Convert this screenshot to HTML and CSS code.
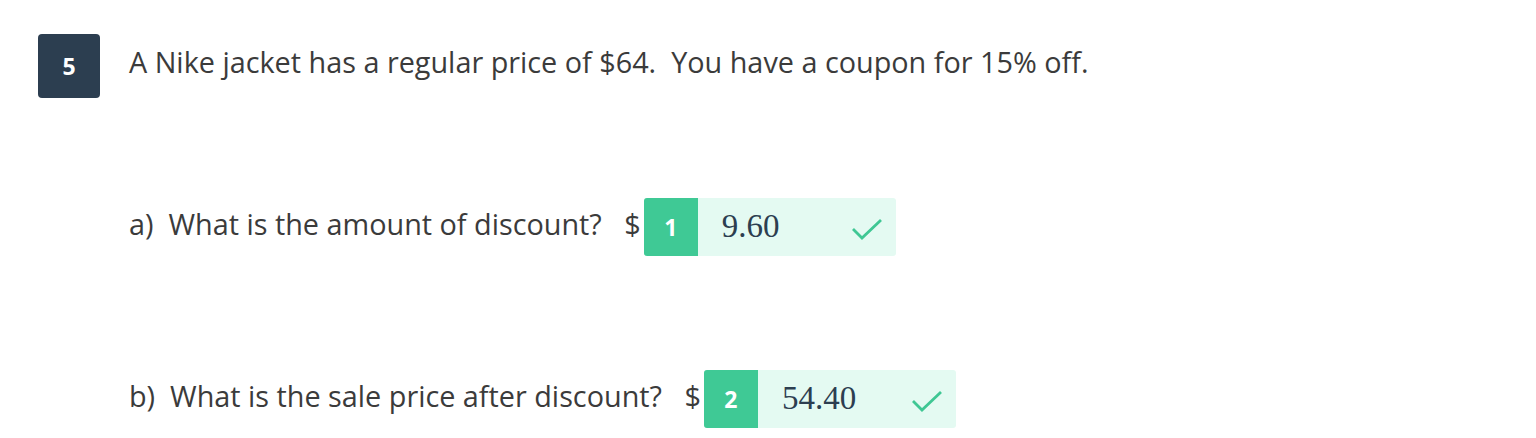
FILE: index.html
```html
<!DOCTYPE html>
<html>
<head>
<meta charset="utf-8">
<link rel="stylesheet" href="styles.css">
</head>
<body>
<div class="question">
  <div class="q-head">
    <div class="q-num">5</div>
    <div class="q-text">A Nike jacket has a regular price of $64.&nbsp; You have a coupon for 15% off.</div>
  </div>
  <div class="parts">
    <div class="part part-a">
      <span class="part-label">a)&nbsp; What is the amount of discount?&nbsp;&nbsp; $</span>
      <div class="answer">
        <div class="answer-num">1</div>
        <div class="answer-val">9.60</div>
        <svg class="check" width="32" height="22" viewBox="0 0 32 22"><path d="M2 11 L11 20 L30 2" fill="none" stroke="#3fc794" stroke-width="2.8"/></svg>
      </div>
    </div>
    <div class="part part-b">
      <span class="part-label">b)&nbsp; What is the sale price after discount?&nbsp;&nbsp; $</span>
      <div class="answer">
        <div class="answer-num">2</div>
        <div class="answer-val">54.40</div>
        <svg class="check" width="32" height="22" viewBox="0 0 32 22"><path d="M2 11 L11 20 L30 2" fill="none" stroke="#3fc794" stroke-width="2.8"/></svg>
      </div>
    </div>
  </div>
</div>
</body>
</html>
```

FILE: styles.css
```css
html, body {
  margin: 0;
  padding: 0;
  background: #fff;
}
body {
  font-family: "Open Sans", Lato, sans-serif;
  color: #3b3b3b;
}
.question {
  padding: 34px 0 0 38px;
}
.q-head {
  display: flex;
  align-items: flex-start;
  gap: 29px;
}
.q-num {
  width: 62px;
  height: 64px;
  background: #2c3e50;
  border-radius: 4px;
  color: #fff;
  font-weight: 700;
  font-size: 23px;
  display: flex;
  align-items: center;
  justify-content: center;
  flex: none;
}
.q-text {
  font-size: 28.8px;
  line-height: 40px;
  padding-top: 8px;
}
.parts {
  padding-left: 91px;
  display: flex;
  flex-direction: column;
  gap: 114px;
  margin-top: 100px;
}
.part {
  display: flex;
  align-items: center;
  font-size: 28.8px;
  line-height: 40px;
}
.part-label {
  white-space: pre;
  padding-right: 3px;
  padding-bottom: 6px;
}
.answer {
  display: flex;
  align-items: center;
  width: 252px;
  height: 58px;
  background: #e4faf2;
  border-radius: 3px;
  overflow: hidden;
}
.answer-num {
  width: 54px;
  height: 58px;
  background: #3fc995;
  color: #fff;
  font-weight: 700;
  font-size: 23px;
  display: flex;
  align-items: center;
  justify-content: center;
  flex: none;
}
.answer-val {
  font-family: "Liberation Serif", "DejaVu Serif", serif;
  font-size: 33px;
  color: #2c3e50;
  padding-left: 24px;
  padding-bottom: 3px;
  flex: 1;
}
.check {
  margin-right: 13px;
  margin-top: 4px;
}
```
